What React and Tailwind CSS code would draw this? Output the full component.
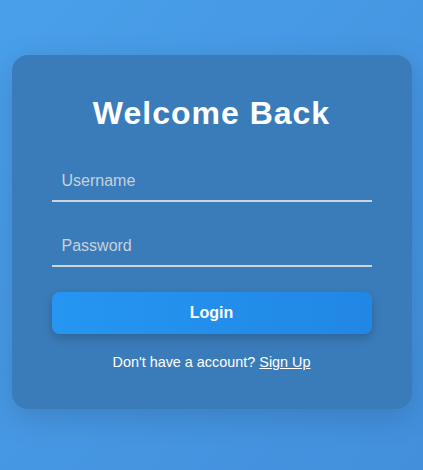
export default function App() {
  return (
    <div
      className="min-h-[470px] w-full flex justify-center pt-[55px] bg-gradient-to-br from-[#49a0ea] to-[#438fdc]"
      style={{ fontFamily: '"Liberation Sans", Arial, sans-serif' }}
    >
      <div className="w-[400px] h-fit rounded-2xl bg-[#3a7cb9] px-10 pt-10 pb-[38px] shadow-[0_8px_32px_rgba(0,0,0,0.15)]">
        <h1 className="text-center text-[32px] leading-[36px] font-bold tracking-[1px] text-white mb-[31px]">
          Welcome Back
        </h1>
        <form onSubmit={(e) => e.preventDefault()}>
          <input
            type="text"
            placeholder="Username"
            className="block w-full px-[10px] py-[10px] text-base leading-[18px] bg-transparent border-0 border-b-2 border-[#d0d4d8] text-white placeholder:text-[#c7d1dc] outline-none mb-[25px]"
          />
          <input
            type="password"
            placeholder="Password"
            className="block w-full px-[10px] py-[10px] text-base leading-[18px] bg-transparent border-0 border-b-2 border-[#d0d4d8] text-white placeholder:text-[#c7d1dc] outline-none mb-[25px]"
          />
          <button
            type="submit"
            className="block w-full h-[42px] rounded-lg bg-gradient-to-r from-[#2596f2] to-[#2187e4] text-white font-bold text-base shadow-[0_4px_10px_rgba(0,0,0,0.2)]"
          >
            Login
          </button>
        </form>
        <p className="mt-5 text-center text-[14.4px] leading-[17px] text-white">
          Don't have a account? <a href="#" className="underline">Sign Up</a>
        </p>
      </div>
    </div>
  );
}
